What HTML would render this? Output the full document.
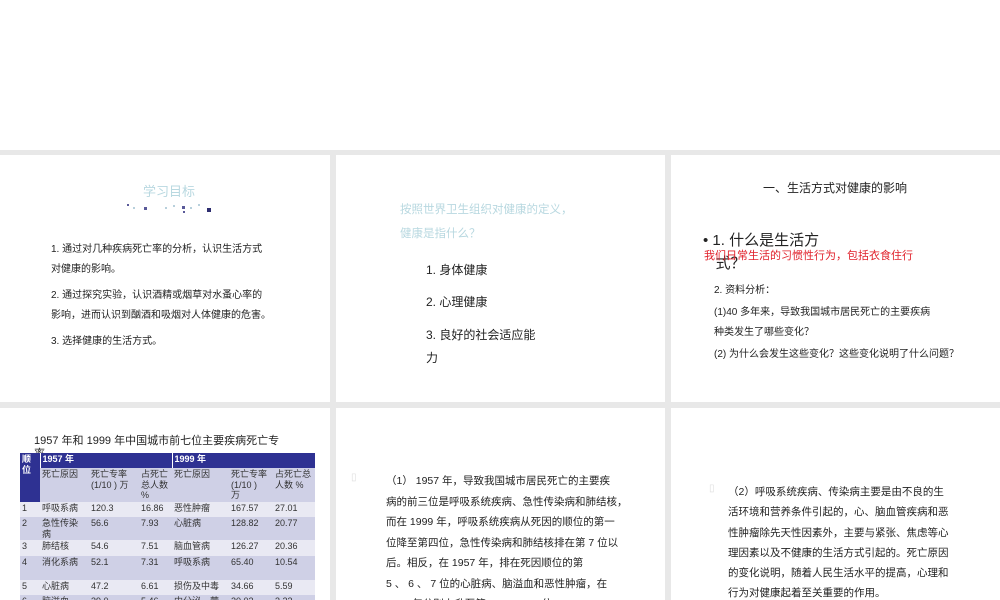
<!DOCTYPE html>
<html><head><meta charset="utf-8"><style>
*{margin:0;padding:0;box-sizing:border-box}
body{width:1000px;height:600px;overflow:hidden;background:#fff;font-family:"Liberation Sans","Noto Sans CJK SC",sans-serif;position:relative;color:#222}
.bg{position:absolute;left:0;top:150px;width:1000px;height:450px;background:#e8e8e8}
.c{position:absolute;background:#fff;overflow:hidden}
.t{position:absolute;white-space:nowrap}
table{position:absolute;left:20px;top:45px;border-collapse:collapse;font-size:9px;color:#333;line-height:10.5px}
td{vertical-align:top;padding:1px 2px}
</style></head><body>
<div class="bg"></div>
<div class="c" style="left:0;top:155px;width:330px;height:247px">
<div class="t" style="left:143px;top:26px;font-size:13px;color:#b8d8e0">学习目标</div>
<svg style="position:absolute;left:125px;top:47px" width="90" height="16"><g fill="#5a5a99"><rect x="2" y="2" width="2" height="2"/><rect x="19" y="5" width="3" height="3"/><rect x="57" y="4" width="3" height="3"/><rect x="58" y="9" width="2" height="2"/><rect x="82" y="6" width="4" height="4" fill="#2e2e70"/></g><g fill="#b8d0dc"><rect x="8" y="5" width="2" height="2"/><rect x="40" y="5" width="2" height="2"/><rect x="48" y="3" width="2" height="2"/><rect x="65" y="5" width="2" height="2"/><rect x="73" y="2" width="2" height="2"/></g></svg>
<div class="t" style="left:51px;top:85px;font-size:10px;line-height:20px">1. 通过对几种疾病死亡率的分析，认识生活方式<br>对健康的影响。</div>
<div class="t" style="left:51px;top:131px;font-size:10px;line-height:20px">2. 通过探究实验，认识酒精或烟草对水蚤心率的<br>影响，进而认识到酗酒和吸烟对人体健康的危害。</div>
<div class="t" style="left:51px;top:177px;font-size:10px;line-height:20px">3. 选择健康的生活方式。</div>
</div>
<div class="c" style="left:336px;top:155px;width:329px;height:247px">
<div class="t" style="left:64px;top:43px;font-size:11.5px;line-height:24px;color:#b8d8e0">按照世界卫生组织对健康的定义，<br>健康是指什么？</div>
<div class="t" style="left:90px;top:106px;font-size:12px">1. 身体健康</div>
<div class="t" style="left:90px;top:138px;font-size:12px">2. 心理健康</div>
<div class="t" style="left:90px;top:169px;font-size:12px;line-height:23px">3. 良好的社会适应能<br>力</div>
</div>
<div class="c" style="left:671px;top:155px;width:329px;height:247px">
<div class="t" style="left:92px;top:24px;font-size:12px">一、生活方式对健康的影响</div>
<div class="t" style="left:32px;top:74px;font-size:15px;line-height:23px">• 1. 什么是生活方<br>&nbsp;&nbsp;&nbsp;式？</div>
<div class="t" style="left:33px;top:92px;font-size:11px;color:#e0202a">我们日常生活的习惯性行为，包括衣食住行</div>
<div class="t" style="left:43px;top:126px;font-size:10px">2. 资料分析：</div>
<div class="t" style="left:43px;top:148px;font-size:10px;line-height:20px">(1)40 多年来，导致我国城市居民死亡的主要疾病<br>种类发生了哪些变化？</div>
<div class="t" style="left:43px;top:190px;font-size:10px">(2) 为什么会发生这些变化？这些变化说明了什么问题？</div>
</div>
<div class="c" style="left:0;top:408px;width:330px;height:192px">
<div class="t" style="left:34px;top:24px;font-size:11px">1957 年和 1999 年中国城市前七位主要疾病死亡专</div>
<div class="t" style="left:34px;top:37px;font-size:11px">率</div>
<table>
<tr style="height:15px;background:#2e3192;color:#fff;font-weight:bold"><td rowspan="2" style="width:20px;background:#2e3192">顺<br>位</td><td colspan="3" style="border-left:1px solid #fff">1957 年</td><td colspan="3" style="border-left:1px solid #fff">1999 年</td></tr>
<tr style="height:34px;background:#cfd0e6"><td style="width:49px">死亡原因</td><td style="width:50px">死亡专率<br>(1/10 ) 万</td><td style="width:33px">占死亡<br>总人数<br>%</td><td style="width:57px">死亡原因</td><td style="width:44px">死亡专率<br>(1/10 )<br>万</td><td style="width:42px">占死亡总<br>人数 %</td></tr>
<tr style="height:15px;background:#e9e9f3"><td>1</td><td>呼吸系病</td><td>120.3</td><td>16.86</td><td>恶性肿瘤</td><td>167.57</td><td>27.01</td></tr>
<tr style="height:23px;background:#cfd0e6"><td>2</td><td>急性传染<br>病</td><td>56.6</td><td>7.93</td><td>心脏病</td><td>128.82</td><td>20.77</td></tr>
<tr style="height:16px;background:#e9e9f3"><td>3</td><td>肺结核</td><td>54.6</td><td>7.51</td><td>脑血管病</td><td>126.27</td><td>20.36</td></tr>
<tr style="height:24px;background:#cfd0e6"><td>4</td><td>消化系病</td><td>52.1</td><td>7.31</td><td>呼吸系病</td><td>65.40</td><td>10.54</td></tr>
<tr style="height:15px;background:#e9e9f3"><td>5</td><td>心脏病</td><td>47.2</td><td>6.61</td><td>损伤及中毒</td><td>34.66</td><td>5.59</td></tr>
<tr style="height:15px;background:#cfd0e6"><td>6</td><td>脑溢血</td><td>39.0</td><td>5.46</td><td>内分泌、营</td><td>20.02</td><td>3.23</td></tr>
</table>
</div>
<div class="c" style="left:336px;top:408px;width:329px;height:192px">
<div class="t" style="left:15px;top:64px;font-size:10px;color:#ddd">▯</div>
<div class="t" style="left:50px;top:63px;font-size:10.5px;line-height:20.5px">（1） 1957 年，导致我国城市居民死亡的主要疾<br>病的前三位是呼吸系统疾病、急性传染病和肺结核，<br>而在 1999 年，呼吸系统疾病从死因的顺位的第一<br>位降至第四位，急性传染病和肺结核排在第 7 位以<br>后。相反，在 1957 年，排在死因顺位的第<br>5 、 6 、 7 位的心脏病、脑溢血和恶性肿瘤，在<br>1999 年分别上升至第 3 、 2 、 1 位。</div>
</div>
<div class="c" style="left:671px;top:408px;width:329px;height:192px">
<div class="t" style="left:38px;top:75px;font-size:10px;color:#ddd">▯</div>
<div class="t" style="left:57px;top:74px;font-size:10.5px;line-height:20.3px">（2）呼吸系统疾病、传染病主要是由不良的生<br>活环境和营养条件引起的，心、脑血管疾病和恶<br>性肿瘤除先天性因素外，主要与紧张、焦虑等心<br>理因素以及不健康的生活方式引起的。死亡原因<br>的变化说明，随着人民生活水平的提高，心理和<br>行为对健康起着至关重要的作用。</div>
</div>
</body></html>
